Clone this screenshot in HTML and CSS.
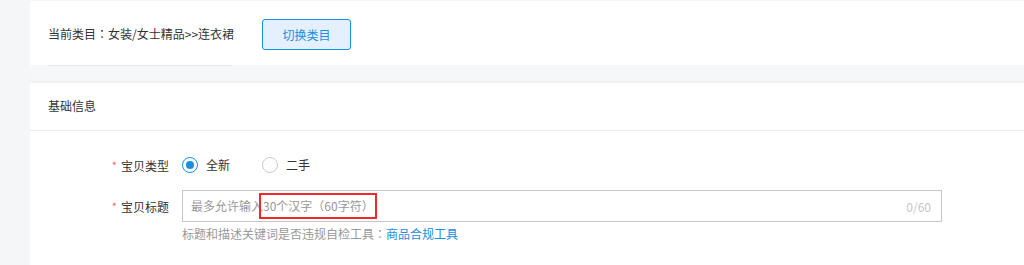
FILE: index.html
```html
<!DOCTYPE html>
<html lang="zh">
<head>
<meta charset="utf-8">
<link rel="stylesheet" href="styles.css">
</head>
<body>
<div class="page">
  <div class="card cat-card">
    <span class="cat-text">当前类目<span class="cjk-p" lang="ja">：</span>女装/女士精品&gt;&gt;连衣裙</span>
    <button class="switch-btn">切换类目</button>
  </div>
  <div class="gap"><div class="gap-line"></div></div>
  <div class="card info-card">
    <div class="info-head">基础信息</div>
    <div class="form">
      <div class="row row-radio">
        <div class="label"><span class="req">*</span>宝贝类型</div>
        <div class="control radios">
          <label class="radio checked"><span class="dot"></span>全新</label>
          <label class="radio"><span class="dot"></span>二手</label>
        </div>
      </div>
      <div class="row row-input">
        <div class="label"><span class="req">*</span>宝贝标题</div>
        <div class="control">
          <div class="input">
            <span class="ph">最多允许输入<span class="mark">30个汉字<span class="cjk-p" lang="ja">（</span>60字符<span class="cjk-p" lang="ja">）</span></span></span>
            <span class="count">0/60</span>
          </div>
          <div class="help">标题和描述关键词是否违规自检工具<span class="cjk-p" lang="ja">：</span><a class="link">商品合规工具</a></div>
        </div>
      </div>
    </div>
  </div>
</div>
</body>
</html>
```
FILE: styles.css
```css
html, body {
  margin: 0;
  padding: 0;
}
body {
  background: #f5f6f8;
  font-family: "Noto Sans CJK SC", "Noto Sans", sans-serif;
  font-size: 12px;
  color: #333;
  height: 265px;
  overflow: hidden;
}
.cjk-p {
  font-family: "Noto Sans CJK JP", "Noto Sans CJK SC", sans-serif;
}
.page {
  padding: 1px 0 0 30px;
}
.card {
  background: #fff;
}
.cat-card {
  height: 64px;
  display: flex;
  align-items: center;
  padding-left: 18px;
  box-sizing: border-box;
}
.cat-text {
  color: #333;
  width: 214px;
  padding-top: 1px;
}
.switch-btn {
  width: 89px;
  height: 31px;
  border: 1px solid #1a8ee0;
  background: #e4f0fd;
  color: #1a8ee0;
  border-radius: 3px;
  font-family: inherit;
  font-size: 12px;
  padding: 0;
  margin-top: 3px;
}
.gap {
  height: 18px;
  background: linear-gradient(#f6f7f9, #f6f7f9 80%, #eff0f2);
}
.gap-line {
  margin-left: 18px;
  width: 184px;
  height: 1px;
  background: #e9eaed;
}
.info-head {
  height: 47px;
  line-height: 46px;
  padding-left: 18px;
  border-bottom: 1px solid #eaeaea;
  color: #333;
}
.form {
  padding-top: 23px;
  height: 120px;
}
.row {
  display: flex;
  align-items: flex-start;
}
.label {
  width: 152px;
  text-align: right;
  padding-right: 13px;
  box-sizing: border-box;
  font-size: 12px;
  color: #333;
}
.req {
  color: #f06a6a;
  font-size: 11px;
  margin-right: 4px;
  vertical-align: 1px;
}
.row-radio {
  height: 22px;
  line-height: 22px;
}
.radios {
  display: flex;
}
.radio {
  display: flex;
  align-items: center;
  font-size: 12px;
  color: #333;
  width: 80px;
}
.dot {
  width: 16px;
  height: 16px;
  border-radius: 50%;
  border: 1px solid #c9cbd2;
  box-sizing: border-box;
  margin-right: 8px;
  position: relative;
}
.radio.checked .dot {
  border-color: #1a8ee0;
}
.radio.checked .dot::after {
  content: "";
  position: absolute;
  left: 3px;
  top: 3px;
  width: 8px;
  height: 8px;
  border-radius: 50%;
  background: #1a8ee0;
}
.row-input {
  margin-top: 14px;
}
.row-input .label {
  line-height: 32px;
}
.input {
  width: 760px;
  height: 32px;
  border: 1px solid #c4c6cf;
  box-sizing: border-box;
  display: flex;
  align-items: center;
  justify-content: space-between;
  padding: 0 10px 0 8px;
  font-size: 12px;
}
.ph {
  color: #999;
}
.mark {
  display: inline-block;
  border: 2px solid #ee2a2a;
  padding: 3px 1px 3px 2px;
  margin-left: -4px;
  line-height: 16px;
}
.count {
  color: #c8c8c8;
}
.help {
  color: #999;
  margin-top: 3px;
  line-height: 17px;
}
.link {
  color: #1a8ee0;
}
```
